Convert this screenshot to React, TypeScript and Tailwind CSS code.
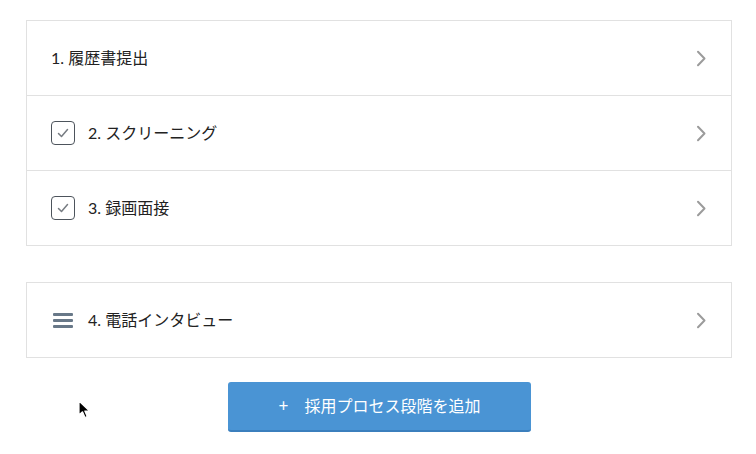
const font = { fontFamily: '"Lato", "Noto Sans CJK JP", sans-serif' };

function CheckBox() {
  return (
    <span className="w-[24px] h-[24px] shrink-0 rounded-[4px] border-[1.5px] border-[#4d545c] flex items-center justify-center mr-[13px]">
      <svg width="14" height="14" viewBox="0 0 14 14" fill="none">
        <path d="M2.5 7.5 L5.5 10.5 L11.5 3.5" stroke="#777c82" strokeWidth="1.5" strokeLinecap="round" strokeLinejoin="round" />
      </svg>
    </span>
  );
}

function Handle() {
  return (
    <span className="w-[20px] shrink-0 flex flex-col gap-[3px] ml-[2px] mr-[15px]">
      <span className="h-[3px] bg-[#687888] rounded-[1px]" />
      <span className="h-[3px] bg-[#687888] rounded-[1px]" />
      <span className="h-[3px] bg-[#687888] rounded-[1px]" />
    </span>
  );
}

function Chevron() {
  return (
    <svg width="11" height="17" viewBox="0 0 11 17" fill="none" className="shrink-0">
      <path d="M2 1.8 L8.5 8.5 L2 15.2" stroke="#9b9b9b" strokeWidth="2" strokeLinecap="round" strokeLinejoin="round" />
    </svg>
  );
}

function Row({ label, lead, last }: { label: string; lead?: "check" | "handle"; last?: boolean }) {
  return (
    <div className={`flex items-center pl-[24px] pr-[24px] ${last ? "h-[74px]" : "h-[75px] border-b border-[#e1e1e1]"}`}>
      {lead === "check" && <CheckBox />}
      {lead === "handle" && <Handle />}
      <span className="text-[16px] text-[#222] flex-1 -mt-[1px]">{label}</span>
      <Chevron />
    </div>
  );
}

export default function App() {
  return (
    <div className="w-[756px] h-[454px] bg-white relative overflow-hidden" style={font}>
      <div className="pt-[20px] pl-[26px] w-[732px]">
        <div className="border border-[#e1e1e1]">
          <Row label="1. 履歴書提出" />
          <Row label="2. スクリーニング" lead="check" />
          <Row label="3. 録画面接" lead="check" last />
        </div>
        <div className="border border-[#e1e1e1] mt-[36px]">
          <Row label="4. 電話インタビュー" lead="handle" last />
        </div>
        <div className="flex justify-center mt-[24px] pl-[1px]">
          <button className="w-[303px] h-[50px] rounded-[3px] bg-[#4a94d4] border-b-2 border-[#3b7fbd] text-white text-[16px] flex items-center justify-center">
            <span className="mr-[16px] text-[17px]">+</span>
            採用プロセス段階を追加
          </button>
        </div>
      </div>
      <svg className="absolute left-[78px] top-[400px]" width="14" height="20" viewBox="0 0 14 20">
        <path d="M1 1 L1 15 L4.5 11.8 L7 17.5 L9.2 16.5 L6.8 11 L11.5 11 Z" fill="#000" stroke="#fff" strokeWidth="1.2" strokeLinejoin="round" />
      </svg>
    </div>
  );
}
